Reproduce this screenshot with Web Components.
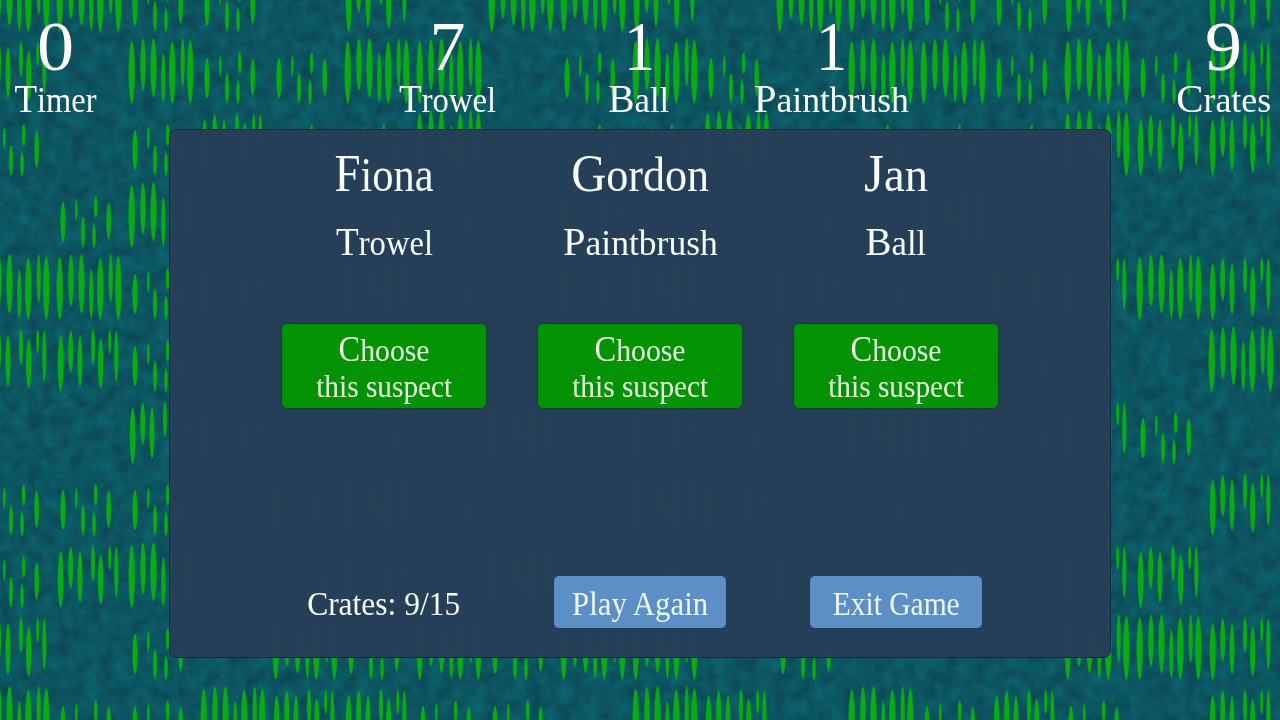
<!DOCTYPE html>
<html lang="en">
<head>
<meta charset="utf-8">
<title>Garden suspects</title>
<style>
html,body{margin:0;height:100%;overflow:hidden;background:#0d5663}
body{font-family:"Liberation Serif",serif;color:#f8fbfd}
</style>
</head>
<body>
<garden-game></garden-game>
<script>
const shadow = (el, html) => {
  const root = el.attachShadow({mode: 'open'});
  root.innerHTML = html;
  return root;
};

/* Single line of text, condensed or widened to a given width. */
customElements.define('fit-text', class extends HTMLElement {
  connectedCallback() {
    const a = n => this.getAttribute(n);
    const size = +a('size'), cap = +(a('cap') || size), line = +a('line'), w = +a('w');
    const root = shadow(this, `<style>
      :host{display:flex;justify-content:center;width:${w}px;height:${line}px}
      div{display:block;flex:none;white-space:nowrap;font-size:${size}px;line-height:${line}px}
      div::first-letter{font-size:${cap}px;line-height:0}
    </style><div><slot></slot></div>`);
    const box = root.querySelector('div');
    box.textContent = this.textContent;
    this.textContent = '';
    const nat = box.getBoundingClientRect().width;
    box.style.transform = `scaleX(${w / nat})`;
  }
});

/* Tiled meadow: 72px cells, each empty or one of three grass patches. */
customElements.define('garden-map', class extends HTMLElement {
  connectedCallback() {
    const patches = {
      A: [[3.7,4.7,68,6.4],[15,2.5,54.7,5.6],[25.5,2,61.5,6.4],[35.3,17,67,4.4],[44.3,5.5,68,6.6],[54.7,2,51,4.4],[62.3,4,68,6.4]],
      B: [[4.7,11.3,68,6],[14.7,6.3,49,5.2],[24,11.3,63,5.2],[37,4.7,41.3,4.2],[44.7,14.7,64.7,5.6],[53.7,5.3,30.3,3.2],[60.3,6.3,58,4.2]],
      C: [[7,21.7,62.3,5.4],[20.3,19.3,40.7,2.8],[27,36.7,67.7,4.2],[38,44,68.3,3.8],[39.7,16,38.3,3.8],[52.7,22.3,60,4.8]]
    };
    const map = [
      'AACC.B.AAB.AACCB.B',
      'B.ACCAA.CAC.AACACB',
      'C.CBCCA.CCA.CCCABB',
      '.CA..CC.B..C.A....',
      'AACB.AC.BA.BC.BBAB',
      'BBC..B.CA..B.CC..A',
      '..BB.C.A.BC.ABCBC.',
      'CCC.BAC..AB.C....B',
      'CBA.CB.A.C.B.C.BB.',
      'B.C.ACACAA.C...AAB',
      'ACCABBCC.AB.ACBC.B'
    ];
    const blade = ([x, t, b, w]) => {
      const n = Math.round((b - t) / 1.1), L = [], R = [];
      for (let i = 1; i < n; i++) {
        const p = i / n, y = t + (b - t) * p;
        const r = w / 2 * Math.pow(Math.sin(Math.PI * p), .5);
        const j = i % 2 ? .3 : -.3;
        L.push(`${(x - r + j).toFixed(2)} ${y.toFixed(2)}`);
        R.unshift(`${(x + r + j).toFixed(2)} ${y.toFixed(2)}`);
      }
      return `M${x} ${t}L${L.join('L')}L${x} ${b}L${R.join('L')}Z`;
    };
    const defs = Object.keys(patches).map(k => `<path id="${k}" d="${patches[k].map(blade).join('')}"/>`).join('');
    const cells = map.map((row, r) => [...row].map((c, k) =>
      c === '.' ? '' : `<use href="#${c}" x="${-16 + 72 * k}" y="${-36 + 72 * r}"/>`).join('')).join('');
    shadow(this, `<style>:host{display:block}svg{display:block}</style>
    <svg width="1280" height="720" viewBox="0 0 1280 720">
      <defs>${defs}
        <filter id="soil" x="0" y="0" width="100%" height="100%" color-interpolation-filters="sRGB">
          <feTurbulence type="fractalNoise" baseFrequency=".07" numOctaves="3" seed="4"/>
          <feColorMatrix values="0 0 0 0 .047  .17 0 0 0 .25  .14 0 0 0 .31  0 0 0 0 1"/>
        </filter>
      </defs>
      <rect width="1280" height="720" filter="url(#soil)"/>
      <g fill="#08ad16" stroke="#08702f" stroke-opacity=".35" stroke-width=".7">${cells}</g>
    </svg>`);
  }
});

customElements.define('hud-stat', class extends HTMLElement {
  connectedCallback() {
    const a = n => this.getAttribute(n);
    shadow(this, `<style>
      :host{display:flex;flex-direction:column;align-items:center;gap:5px;color:#fff}
    </style>
    <fit-text size="70" line="60" w="${a('vw')}">${a('value')}</fit-text>
    <fit-text size="36" cap="41" line="36" w="${a('lw')}">${a('label')}</fit-text>`);
  }
});

customElements.define('game-button', class extends HTMLElement {
  connectedCallback() {
    shadow(this, `<style>
      :host{box-sizing:border-box;display:flex;flex-direction:column;align-items:center;justify-content:center;
        width:174px;height:54px;border:1px solid #1c3a5a;border-radius:6px;background:#5b8fc6;color:#edf6ff}
      :host([kind=choose]){width:206px;height:86px;padding-top:3px;border-color:#0c4728;background:#039203;color:#e9fae4}
    </style><slot></slot>`);
  }
});

customElements.define('suspect-card', class extends HTMLElement {
  connectedCallback() {
    const a = n => this.getAttribute(n);
    shadow(this, `<style>
      :host{display:flex;flex-direction:column;align-items:center;width:256px}
      .item{margin:18px 0 60px}
    </style>
    <fit-text size="48" cap="53" line="60" w="${a('nw')}">${a('name')}</fit-text>
    <fit-text class="item" size="36" cap="41" line="40" w="${a('iw')}">${a('item')}</fit-text>
    <game-button kind="choose">
      <fit-text size="32" cap="35" line="36" w="91">Choose</fit-text>
      <fit-text size="32" line="36" w="136">this suspect</fit-text>
    </game-button>`);
  }
});

customElements.define('verdict-panel', class extends HTMLElement {
  connectedCallback() {
    shadow(this, `<style>
      :host{box-sizing:border-box;display:flex;flex-direction:column;justify-content:space-between;
        width:942px;height:529px;padding:15px 0 28px;border:1px solid #102c3c;border-radius:7px;
        background:rgba(38,63,89,.988)}
      .row{display:grid;grid-template-columns:repeat(3,256px);justify-content:center;justify-items:center;align-items:center}
      .row fit-text{margin-top:2px}
    </style>
    <div class="row"><slot></slot></div>
    <div class="row">
      <fit-text size="34" line="51" w="153">Crates: 9/15</fit-text>
      <game-button><fit-text size="34" line="51" w="136">Play Again</fit-text></game-button>
      <game-button><fit-text size="34" line="51" w="127">Exit Game</fit-text></game-button>
    </div>`);
  }
});

customElements.define('garden-game', class extends HTMLElement {
  connectedCallback() {
    shadow(this, `<style>
      :host{position:relative;display:flex;flex-direction:column;align-items:center;width:1280px;height:720px;overflow:hidden}
      garden-map{position:absolute;inset:0}
      header{position:relative;box-sizing:border-box;display:grid;width:1280px;height:129px;padding-top:17px;
        grid-template-columns:111px 240px repeat(3,192px) 240px 113px}
      hud-stat:nth-child(2){grid-column:3}
      hud-stat:nth-child(5){grid-column:7}
      verdict-panel{position:relative}
    </style>
    <garden-map></garden-map>
    <header>
      <hud-stat value="0" vw="37" label="Timer" lw="82"></hud-stat>
      <hud-stat value="7" vw="36" label="Trowel" lw="97"></hud-stat>
      <hud-stat value="1" vw="31" label="Ball" lw="61"></hud-stat>
      <hud-stat value="1" vw="31" label="Paintbrush" lw="155"></hud-stat>
      <hud-stat value="9" vw="37" label="Crates" lw="95"></hud-stat>
    </header>
    <verdict-panel>
      <suspect-card name="Fiona" nw="99" item="Trowel" iw="97"></suspect-card>
      <suspect-card name="Gordon" nw="138" item="Paintbrush" iw="155"></suspect-card>
      <suspect-card name="Jan" nw="64" item="Ball" iw="61"></suspect-card>
    </verdict-panel>`);
  }
});
</script>
</body>
</html>
